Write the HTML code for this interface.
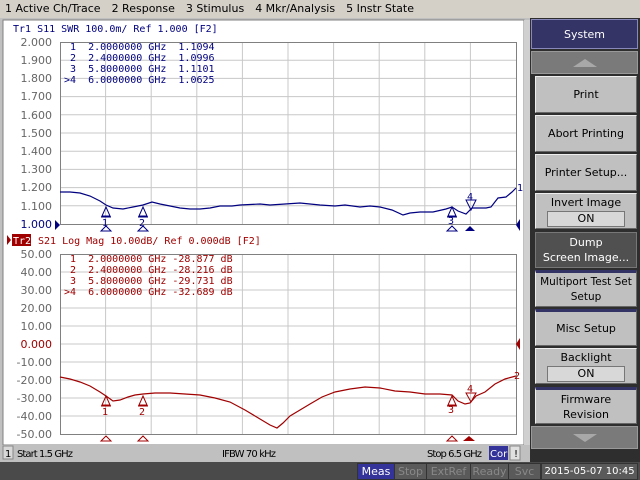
<!DOCTYPE html>
<html style="overflow:hidden"><head><style>
html,body{margin:0;width:640px;height:480px;overflow:hidden}
body{background:#404040;font-family:"DejaVu Sans","Liberation Sans",sans-serif;position:relative}
.menu{position:absolute;left:0;top:0;width:640px;height:18px;background:#d4d0c8;font-size:11px;line-height:18px;color:#000;white-space:nowrap}
.menu span{margin-left:5px;margin-right:6px}
.btn{position:absolute;left:535px;width:102px;background:#c0c0c0;border-top:1px solid #eee;border-left:1px solid #eee;border-right:1px solid #666;border-bottom:1px solid #666;font-size:11px;text-align:center;color:#000;box-sizing:border-box;display:flex;flex-direction:column;justify-content:center;line-height:15px;white-space:nowrap;overflow:hidden}
.on{margin:1px auto 0;width:76px;height:14px;background:#d8d8d8;border:1px solid #777;line-height:13px;font-size:11px}
.sb{position:absolute;top:463px;height:15px;font-size:11px;line-height:15px;color:#888;background:#5a5a5a;border:1px solid #333;text-align:center;white-space:nowrap;overflow:hidden}
.pre text{white-space:pre}
</style></head><body>
<div class="menu"><span>1 Active Ch/Trace</span><span>2 Response</span><span>3 Stimulus</span><span>4 Mkr/Analysis</span><span>5 Instr State</span></div>
<div style="position:absolute;left:0;top:18px;width:531px;height:444px;background:#c0c0c0"></div>
<svg style="position:absolute;left:0;top:0" width="531" height="462" font-family="DejaVu Sans Mono,Liberation Mono,monospace" font-size="10">
<rect x="3" y="20" width="521" height="425" fill="#fff" stroke="#808080"/>
<rect x="524" y="20" width="6" height="425" fill="#d0d0d0"/>
<g stroke="#c8c8c8" stroke-width="1">
<path d="M105.6 42V224M151.2 42V224M196.8 42V224M242.4 42V224M288 42V224M333.6 42V224M379.2 42V224M424.8 42V224M470.4 42V224M60 60.2H516M60 78.4H516M60 96.6H516M60 114.8H516M60 133H516M60 151.2H516M60 169.4H516M60 187.6H516M60 205.8H516"/>
<path d="M105.6 254V434M151.2 254V434M196.8 254V434M242.4 254V434M288 254V434M333.6 254V434M379.2 254V434M424.8 254V434M470.4 254V434M60 272H516M60 290H516M60 308H516M60 326H516M60 344H516M60 362H516M60 380H516M60 398H516M60 416H516"/>
</g>
<rect x="60.5" y="42.5" width="456" height="182" fill="none" stroke="#808080"/>
<rect x="60.5" y="254.5" width="456" height="180" fill="none" stroke="#808080"/>
<text x="13" y="32" fill="#000080">Tr1 S11 SWR 100.0m/ Ref 1.000 [F2]</text>
<g fill="#000080" class="pre">
<text x="58" y="50" xml:space="preserve">  1  2.0000000 GHz  1.1094</text>
<text x="58" y="61" xml:space="preserve">  2  2.4000000 GHz  1.0996</text>
<text x="58" y="72" xml:space="preserve">  3  5.8000000 GHz  1.1101</text>
<text x="58" y="83" xml:space="preserve"> &gt;4  6.0000000 GHz  1.0625</text>
</g>
<g fill="#666" font-family="DejaVu Sans,sans-serif" font-size="11" text-anchor="end">
<text x="52" y="46">2.000</text><text x="52" y="64">1.900</text><text x="52" y="82">1.800</text><text x="52" y="100">1.700</text><text x="52" y="119">1.600</text><text x="52" y="137">1.500</text><text x="52" y="155">1.400</text><text x="52" y="173">1.300</text><text x="52" y="191">1.200</text><text x="52" y="210">1.100</text><text x="52" y="228" fill="#000080">1.000</text>
<text x="52" y="258">50.00</text><text x="52" y="276">40.00</text><text x="52" y="294">30.00</text><text x="52" y="312">20.00</text><text x="52" y="330">10.00</text><text x="52" y="348" fill="#a00000">0.000</text><text x="52" y="366">-10.00</text><text x="52" y="384">-20.00</text><text x="52" y="402">-30.00</text><text x="52" y="420">-40.00</text><text x="52" y="438">-50.00</text>
</g>
<path d="M55 220L60 225L55 230Z" fill="#000080"/>
<path d="M7 235L11 240L7 245Z" fill="#a00000"/>
<rect x="12" y="234" width="19" height="12" fill="#a00000"/>
<text x="13" y="244" fill="#fff">Tr2</text>
<text x="38" y="244" fill="#a00000">S21 Log Mag 10.00dB/ Ref 0.000dB [F2]</text>
<g fill="#a00000" class="pre">
<text x="58" y="262" xml:space="preserve">  1  2.0000000 GHz -28.877 dB</text>
<text x="58" y="273" xml:space="preserve">  2  2.4000000 GHz -28.216 dB</text>
<text x="58" y="284" xml:space="preserve">  3  5.8000000 GHz -29.731 dB</text>
<text x="58" y="295" xml:space="preserve"> &gt;4  6.0000000 GHz -32.689 dB</text>
</g>
<path d="M60 192L70 192L80 193L90 196L100 201L106 205L113 208L123 209L133 207L143 205L152 202L160 204L170 206L180 208L190 209L200 209L210 208L220 206L232 206L240 205L260 204L270 205L285 204L300 203L310 204L320 205L335 206L345 205L360 207L370 206L380 207L392 210L403 215L410 213L420 212L433 212L446 209L452 207L458 211L466 214L472 208L478 208L486 208L491 207L498 198L506 197L512 192L516 188" fill="none" stroke="#000080" stroke-width="1.2"/>
<path d="M60 377L70 379L80 382L90 386L100 392L106 396L113 401L120 400L128 397L135 395L143 394L155 393L170 393L185 394L200 395L215 398L230 402L245 410L255 416L270 425L277 428L283 423L290 416L300 410L310 404L322 397L335 392L350 389L365 387L380 388L395 391L410 392L425 394L440 394L452 395L458 401L465 404L470 403L476 396L485 392L495 384L505 379L516 376" fill="none" stroke="#a00000" stroke-width="1.2"/>
<text x="517" y="191" fill="#000080">1</text><text x="514" y="379" fill="#a00000">2</text>
<path d="M520 219L516 225L520 231Z" fill="#000080"/><path d="M520 338L516 344L520 350Z" fill="#a00000"/>
<g fill="none" stroke="#000080"><path d="M102 216L106 207L110 216Z M101 217H111M139 216L143 207L147 216Z M138 217H148M448 216L452 207L456 216Z M447 217H457M466 200H476L471 210Z"/><path d="M101 231L106 226L111 231ZM138 231L143 226L148 231ZM447 231L452 226L457 231Z"/></g>
<path d="M465 231L470 226L475 231Z" fill="#000080"/>
<g fill="#000080"><text x="102" y="226">1</text><text x="139" y="226">2</text><text x="448" y="224">3</text><text x="467" y="200">4</text></g>
<g fill="none" stroke="#a00000"><path d="M102 405L106 396L110 405ZM101 406H111M139 405L143 396L147 405ZM138 406H148M448 405L452 396L456 405ZM447 406H457M466 393H476L471 402Z"/><path d="M101 441L106 436L111 441ZM138 441L143 436L148 441ZM447 441L452 436L457 441Z"/></g>
<path d="M463 441L469 436L475 441Z" fill="#a00000"/>
<g fill="#a00000"><text x="102" y="415">1</text><text x="139" y="415">2</text><text x="448" y="413">3</text><text x="467" y="392">4</text></g>
<rect x="0" y="445" width="531" height="17" fill="#c0c0c0"/>
<rect x="3" y="446" width="10" height="13" fill="#d8d8d8" stroke="#888"/>
<g font-family="DejaVu Sans,sans-serif" font-size="10" fill="#000"><text x="5" y="457">1</text><text x="17" y="457" textLength="56">Start 1.5 GHz</text><text x="222" y="457" textLength="54">IFBW 70 kHz</text><text x="427" y="457" textLength="55">Stop 6.5 GHz</text></g>
<rect x="489" y="446" width="19" height="14" fill="#333399"/><text x="490" y="457" fill="#fff" font-family="DejaVu Sans,sans-serif" font-size="10">Cor</text>
<rect x="510" y="446" width="10" height="14" fill="#e0e0e0" stroke="#888"/><text x="513" y="457" font-size="10">!</text>
</svg>
<div style="position:absolute;left:0;top:462px;width:640px;height:18px;background:#4a4a4a"></div>
<div class="sb" style="left:357px;width:36px;background:#333399;color:#fff">Meas</div>
<div class="sb" style="left:394px;width:31px">Stop</div>
<div class="sb" style="left:426px;width:43px">ExtRef</div>
<div class="sb" style="left:470px;width:37px">Ready</div>
<div class="sb" style="left:508px;width:31px">Svc</div>
<div class="sb" style="left:541px;width:95px;color:#fff;font-size:10px">2015-05-07 10:45</div>
<div style="position:absolute;left:530px;top:18px;width:110px;height:444px;background:#2e2e2e"></div>
<div style="position:absolute;left:531px;top:19px;width:107px;height:30px;background:#343466;border:1px solid #8888bb;box-sizing:border-box;color:#fff;font-size:11px;text-align:center;line-height:30px">System</div>
<div style="position:absolute;left:531px;top:51px;width:107px;height:23px;background:#7a7a7a;border:1px solid #999;box-sizing:border-box"><div style="margin:7px auto 0;width:0;height:0;border-left:12px solid transparent;border-right:12px solid transparent;border-bottom:8px solid #a8a8a8"></div></div>
<div class="btn" style="top:76px;height:37px">Print</div>
<div class="btn" style="top:115px;height:37px">Abort Printing</div>
<div class="btn" style="top:154px;height:37px">Printer Setup...</div>
<div class="btn" style="top:193px;height:36px">Invert Image<div class="on">ON</div></div>
<div class="btn" style="top:232px;height:36px;background:#505050;color:#fff;border-color:#777">Dump<br>Screen Image...</div>
<div class="btn" style="top:270px;height:37px;border-top:3px solid #333366;font-size:10.5px">Multiport Test Set<br>Setup</div>
<div class="btn" style="top:309px;height:37px;border-top:3px solid #333366">Misc Setup</div>
<div class="btn" style="top:348px;height:36px">Backlight<div class="on">ON</div></div>
<div class="btn" style="top:387px;height:37px;border-top:3px solid #333366">Firmware<br>Revision</div>
<div style="position:absolute;left:531px;top:426px;width:107px;height:23px;background:#7a7a7a;border:1px solid #999;box-sizing:border-box"><div style="margin:7px auto 0;width:0;height:0;border-left:12px solid transparent;border-right:12px solid transparent;border-top:8px solid #a8a8a8"></div></div>
</body></html>
